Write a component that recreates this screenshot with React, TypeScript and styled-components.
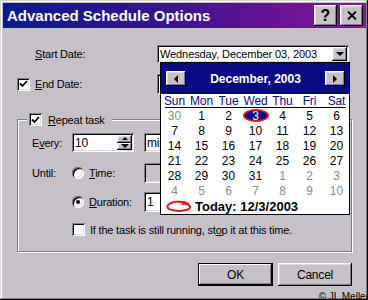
import styled, { createGlobalStyle } from "styled-components";

const FACE = "#c6c1c9";
const NAVY = "#0a0a84";

const raised = `box-shadow: inset -1px -1px #000, inset 1px 1px #fff, inset -2px -2px #808080, inset 2px 2px #dcdcdc;`;
const sunken = `box-shadow: inset 1px 1px #808080, inset -1px -1px #fff, inset 2px 2px #000, inset -2px -2px #dcdcdc;`;

const GlobalStyle = createGlobalStyle`
  html, body { margin: 0; padding: 0; }
  body {
    background: ${FACE};
    font-family: "Liberation Sans", Arial, sans-serif;
    font-size: 11px;
    letter-spacing: -0.2px;
    color: #000;
  }
`;

const weeks: [number, boolean][][] = [
  [[30, true], [1, false], [2, false], [3, false], [4, false], [5, false], [6, false]],
  [[7, false], [8, false], [9, false], [10, false], [11, false], [12, false], [13, false]],
  [[14, false], [15, false], [16, false], [17, false], [18, false], [19, false], [20, false]],
  [[21, false], [22, false], [23, false], [24, false], [25, false], [26, false], [27, false]],
  [[28, false], [29, false], [30, false], [31, false], [1, true], [2, true], [3, true]],
  [[4, true], [5, true], [6, true], [7, true], [8, true], [9, true], [10, true]],
];

const dayNames = ["Sun", "Mon", "Tue", "Wed", "Thu", "Fri", "Sat"];

function CheckMark() {
  return (
    <svg width="9" height="8" viewBox="0 0 9 8">
      <polyline points="1,3.5 3.5,6 8,1" fill="none" stroke="#000" strokeWidth="1.8" />
    </svg>
  );
}

export default function App() {
  return (
    <>
      <GlobalStyle />
      <Dialog>
        <TitleBar>
          <Title>Advanced Schedule Options</Title>
          <TitleButton>?</TitleButton>
          <TitleButton $gap={3}>
            <svg width="10" height="9" viewBox="0 0 10 9">
              <path d="M1 0.5 L9 8.5 M9 0.5 L1 8.5" stroke="#000" strokeWidth="1.8" />
            </svg>
          </TitleButton>
        </TitleBar>

        <FieldRow $top={17} $indent={32}>
          <Label $w={122}>
            <u>S</u>tart Date:
          </Label>
          <DateCombo>
            <span>Wednesday, December 03, 2003</span>
            <DropButton>
              <Arrow $dir="down" />
            </DropButton>
          </DateCombo>
        </FieldRow>

        <FieldRow $top={12} $indent={14}>
          <CheckBox $gap={5}>
            <CheckMark />
          </CheckBox>
          <Label $w={122}>
            <u>E</u>nd Date:
          </Label>
          <WhiteField $w={192} />
        </FieldRow>

        <GroupBox>
          <Legend>
            <CheckBox $gap={6}>
              <CheckMark />
            </CheckBox>
            <span>
              <u>R</u>epeat task
            </span>
          </Legend>

          <GroupRow $top={7}>
            <Label $w={40}>
              E<u>v</u>ery:
            </Label>
            <SpinBox>
              <span>10</span>
              <SpinButtons>
                <SpinButton>
                  <Arrow $dir="up" />
                </SpinButton>
                <SpinButton>
                  <Arrow $dir="down" />
                </SpinButton>
              </SpinButtons>
            </SpinBox>
            <WhiteField $w={100} $h={19}>
              minutes
            </WhiteField>
          </GroupRow>

          <GroupRow $top={11}>
            <Label $w={40}>Until:</Label>
            <Option>
              <Radio />
              <span>
                <u>T</u>ime:
              </span>
            </Option>
            <GrayField />
          </GroupRow>

          <GroupRow $top={9}>
            <Label $w={40} />
            <Option>
              <Radio $checked />
              <span>
                <u>D</u>uration:
              </span>
            </Option>
            <WhiteField $w={100}>1</WhiteField>
          </GroupRow>

          <GroupRow $top={11}>
            <Label $w={40} />
            <CheckBox $gap={5} />
            <span>
              If the task is still running, st<u>o</u>p it at this time.
            </span>
          </GroupRow>
        </GroupBox>

        <ButtonRow>
          <PushButton $default>OK</PushButton>
          <PushButton>Cancel</PushButton>
        </ButtonRow>

        <Calendar>
          <CalHeader>
            <NavButton>
              <Arrow $dir="left" />
            </NavButton>
            <MonthTitle>December, 2003</MonthTitle>
            <NavButton>
              <Arrow $dir="right" />
            </NavButton>
          </CalHeader>
          <DayNames>
            {dayNames.map((d) => (
              <DayName key={d}>{d}</DayName>
            ))}
          </DayNames>
          <Separator />
          <DayGrid>
            {weeks.flat().map(([n, other], i) => (
              <DayCell key={i} $other={other}>
                {n === 3 && !other ? <Selected>3</Selected> : n}
              </DayCell>
            ))}
          </DayGrid>
          <TodayRow>
            <svg width="27" height="13" viewBox="0 0 27 13">
              <path
                d="M24 4 C18 0.5, 5 1, 2.5 6 C1 11, 16 12, 23 9.5 C27 7.5, 25 3, 17 4"
                fill="none"
                stroke="#e0141c"
                strokeWidth="2"
              />
            </svg>
            <span>Today: 12/3/2003</span>
          </TodayRow>
        </Calendar>

        <Copyright>© JL Meller</Copyright>
      </Dialog>
    </>
  );
}

const Dialog = styled.div`
  position: relative;
  box-sizing: border-box;
  width: 368px;
  height: 300px;
  padding: 3px 2px 0 3px;
  background: ${FACE};
  overflow: hidden;
  box-shadow: inset -1px -1px #000, inset 1px 1px #d8d4da,
    inset -2px -2px #808080, inset 2px 2px #fff;
`;
const TitleBar = styled.div`
  display: flex;
  align-items: center;
  height: 25px;
  padding: 0 3px 0 4px;
  background: linear-gradient(90deg, #0a1a8e 0%, #3a1290 45%, #8a149a 100%);
`;
const Title = styled.div`
  flex: 1;
  color: #fff;
  font-family: "Liberation Sans", Arial, sans-serif;
  font-weight: bold;
  font-size: 15px;
  letter-spacing: 0;
`;
const TitleButton = styled.div<{ $gap?: number }>`
  box-sizing: border-box;
  width: 23px;
  height: 21px;
  margin-left: ${(p) => p.$gap ?? 0}px;
  display: flex;
  align-items: center;
  justify-content: center;
  background: ${FACE};
  font-weight: bold;
  font-size: 16px;
  letter-spacing: 0;
  ${raised}
`;
const FieldRow = styled.div<{ $top: number; $indent: number }>`
  display: flex;
  align-items: center;
  height: 18px;
  margin-top: ${(p) => p.$top}px;
  padding-left: ${(p) => p.$indent}px;
`;
const Label = styled.span<{ $w: number }>`
  width: ${(p) => p.$w}px;
  flex-shrink: 0;
`;
const DateCombo = styled.div`
  box-sizing: border-box;
  width: 192px;
  height: 18px;
  display: flex;
  align-items: center;
  justify-content: space-between;
  padding: 0 2px 0 3px;
  background: #fff;
  letter-spacing: -0.1px;
  ${sunken}
`;
const DropButton = styled.div`
  box-sizing: border-box;
  width: 15px;
  height: 14px;
  display: flex;
  align-items: center;
  justify-content: center;
  background: ${FACE};
  ${raised}
`;
const Arrow = styled.span<{ $dir: "up" | "down" | "left" | "right" }>`
  width: 0;
  height: 0;
  border-style: solid;
  ${(p) =>
    p.$dir === "down"
      ? "border-width: 4px 4px 0 4px; border-color: #000 transparent transparent transparent;"
      : p.$dir === "up"
      ? "border-width: 0 3px 3px 3px; border-color: transparent transparent #000 transparent;"
      : p.$dir === "left"
      ? "border-width: 4px 4px 4px 0; border-color: transparent #000 transparent transparent;"
      : "border-width: 4px 0 4px 4px; border-color: transparent transparent transparent #000;"}
`;
const CheckBox = styled.span<{ $gap: number }>`
  box-sizing: border-box;
  width: 13px;
  height: 13px;
  flex-shrink: 0;
  margin-right: ${(p) => p.$gap}px;
  display: flex;
  align-items: center;
  justify-content: center;
  background: #fff;
  ${sunken}
`;
const WhiteField = styled.div<{ $w: number; $h?: number }>`
  box-sizing: border-box;
  width: ${(p) => p.$w}px;
  height: ${(p) => p.$h ?? 20}px;
  flex-shrink: 0;
  display: flex;
  align-items: center;
  padding-left: 3px;
  background: #fff;
  font-size: 12px;
  ${sunken}
`;
const GrayField = styled.div`
  box-sizing: border-box;
  width: 100px;
  height: 20px;
  flex-shrink: 0;
  background: ${FACE};
  ${sunken}
`;
const GroupBox = styled.div`
  box-sizing: border-box;
  width: 335px;
  margin: 26px 0 0 14px;
  padding: 0 0 15px 14px;
  border: 1px solid #808080;
  box-shadow: 1px 1px 0 #fff, inset 1px 1px 0 #fff;
`;
const Legend = styled.div`
  display: flex;
  align-items: center;
  width: fit-content;
  height: 13px;
  margin: -7px 0 0 -5px;
  padding: 0 7px 0 2px;
  background: ${FACE};
`;
const GroupRow = styled.div<{ $top: number }>`
  display: flex;
  align-items: center;
  min-height: 13px;
  margin-top: ${(p) => p.$top}px;
`;
const SpinBox = styled.div`
  box-sizing: border-box;
  width: 62px;
  height: 19px;
  margin-right: 10px;
  display: flex;
  align-items: center;
  justify-content: space-between;
  padding: 2px 2px 2px 3px;
  background: #fff;
  font-size: 12px;
  ${sunken}
`;
const SpinButtons = styled.div`
  display: flex;
  flex-direction: column;
  width: 15px;
  height: 15px;
`;
const SpinButton = styled.div`
  box-sizing: border-box;
  flex: 1;
  display: flex;
  align-items: center;
  justify-content: center;
  background: ${FACE};
  ${raised}
`;
const Option = styled.div`
  display: flex;
  align-items: center;
  gap: 5px;
  width: 72px;
  flex-shrink: 0;
`;
const Radio = styled.span<{ $checked?: boolean }>`
  box-sizing: border-box;
  width: 12px;
  height: 12px;
  border-radius: 50%;
  display: flex;
  align-items: center;
  justify-content: center;
  background: #fff;
  box-shadow: inset 1px 1px #808080, inset -1px -1px #fff, inset 2px 2px #000,
    inset -2px -2px #dcdcdc;

  &::after {
    content: "";
    display: ${(p) => (p.$checked ? "block" : "none")};
    width: 4px;
    height: 4px;
    border-radius: 50%;
    background: #000;
  }
`;
const ButtonRow = styled.div`
  display: flex;
  justify-content: flex-end;
  gap: 5px;
  margin: 11px 14px 0 0;
`;
const PushButton = styled.div<{ $default?: boolean }>`
  box-sizing: border-box;
  width: ${(p) => (p.$default ? 75 : 74)}px;
  height: 23px;
  display: flex;
  align-items: center;
  justify-content: center;
  background: ${FACE};
  font-size: 12px;
  ${(p) =>
    p.$default
      ? "border: 1px solid #000; box-shadow: inset -1px -1px #000, inset 1px 1px #fff, inset -2px -2px #808080;"
      : "box-shadow: inset -1px -1px #000, inset 1px 1px #fff, inset -2px -2px #808080, inset 2px 2px #dcdcdc;"}
`;
const Calendar = styled.div`
  position: absolute;
  left: 160px;
  top: 62px;
  box-sizing: border-box;
  width: 190px;
  height: 153px;
  border: 1px solid #000;
  background: #fff;
  display: flex;
  flex-direction: column;
`;
const CalHeader = styled.div`
  display: flex;
  align-items: center;
  justify-content: space-between;
  height: 31px;
  padding: 0 4px 0 5px;
  background: ${NAVY};
`;
const NavButton = styled.div`
  box-sizing: border-box;
  width: 20px;
  height: 15px;
  display: flex;
  align-items: center;
  justify-content: center;
  background: ${FACE};
  ${raised}
`;
const MonthTitle = styled.span`
  color: #fff;
  font-weight: bold;
  font-size: 12px;
  letter-spacing: 0;
`;
const DayNames = styled.div`
  display: grid;
  grid-template-columns: repeat(7, 27px);
  height: 13px;
  align-items: center;
`;
const DayName = styled.span`
  text-align: center;
  color: ${NAVY};
  font-size: 12px;
  letter-spacing: -0.1px;
`;
const Separator = styled.div`
  height: 1px;
  margin: 0 3px 0 4px;
  background: #000;
`;
const DayGrid = styled.div`
  display: grid;
  grid-template-columns: repeat(7, 27px);
  grid-auto-rows: 15px;
`;
const DayCell = styled.span<{ $other: boolean }>`
  display: flex;
  align-items: center;
  justify-content: center;
  font-size: 12px;
  letter-spacing: 0;
  color: ${(p) => (p.$other ? "#8a8a8a" : "#000")};
`;
const Selected = styled.span`
  box-sizing: border-box;
  width: 26px;
  height: 13px;
  display: flex;
  align-items: center;
  justify-content: center;
  border: 2px solid #e0141c;
  border-radius: 50%;
  background: ${NAVY};
  color: #fff;
`;
const TodayRow = styled.div`
  display: flex;
  align-items: center;
  gap: 3px;
  height: 16px;
  padding-left: 4px;
  font-weight: bold;
  font-size: 13px;
  letter-spacing: 0;
`;
const Copyright = styled.span`
  position: absolute;
  right: -1px;
  bottom: -2px;
  font-size: 10px;
  letter-spacing: 0;
`;
